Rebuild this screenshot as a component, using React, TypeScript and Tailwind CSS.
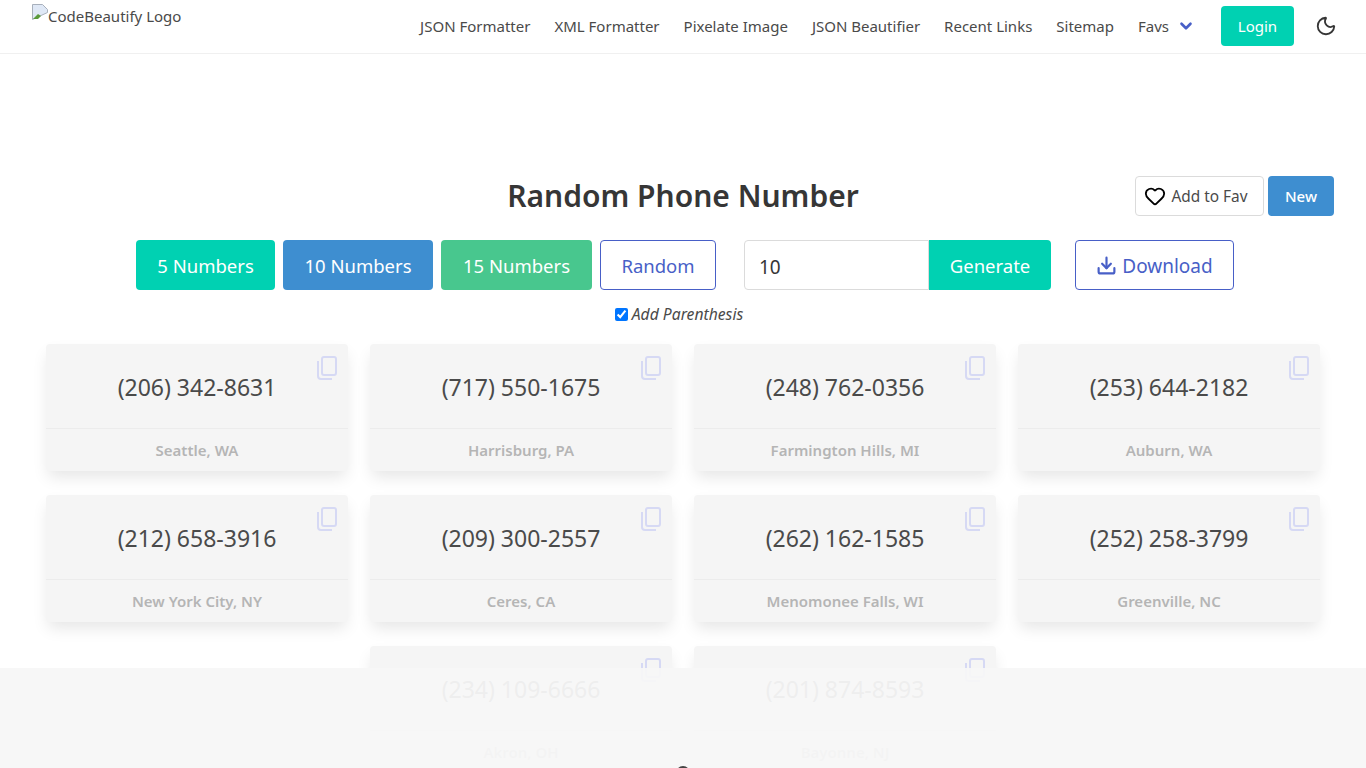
import { ChevronDown, Download, Heart, Moon } from "lucide-react"

const navLinks = ["JSON Formatter", "XML Formatter", "Pixelate Image", "JSON Beautifier", "Recent Links", "Sitemap"]

const numbers = [
  { phone: "(206) 342-8631", city: "Seattle, WA" },
  { phone: "(717) 550-1675", city: "Harrisburg, PA" },
  { phone: "(248) 762-0356", city: "Farmington Hills, MI" },
  { phone: "(253) 644-2182", city: "Auburn, WA" },
  { phone: "(212) 658-3916", city: "New York City, NY" },
  { phone: "(209) 300-2557", city: "Ceres, CA" },
  { phone: "(262) 162-1585", city: "Menomonee Falls, WI" },
  { phone: "(252) 258-3799", city: "Greenville, NC" },
]

const lastRow = [
  { phone: "(234) 109-6666", city: "Akron, OH" },
  { phone: "(201) 874-8593", city: "Bayonne, NJ" },
]

function CopyIcon() {
  return (
    <svg width="22" height="24" viewBox="0 0 22 24" fill="none" stroke="#d6d9f4" strokeWidth="2" className="absolute right-[10px] top-[12px]">
      <rect x="6" y="1" width="14" height="18" rx="2" />
      <path d="M2 5v15a3 3 0 0 0 3 3h11" />
    </svg>
  )
}

function BrokenImage() {
  return (
    <svg width="16" height="16" viewBox="0 0 16 16" className="shrink-0">
      <path d="M.5.5h10l5 5v3l-15 7z" fill="#dfe8f6" stroke="#a8b0bc" />
      <path d="M1 15l5-5 3 2-3 3z" fill="#5a9a3c" />
    </svg>
  )
}

function PhoneCard({ phone, city }: { phone: string; city: string }) {
  return (
    <div className="relative h-[127px] rounded bg-[#f5f5f5] shadow-[0_8px_16px_-2px_rgba(0,0,0,0.1)]">
      <CopyIcon />
      <div className="flex h-[85px] items-center justify-center border-b border-[#ececec] pt-[3px] text-[23px] text-[#4a4a4a]">{phone}</div>
      <div className="flex h-[42px] items-center justify-center text-[15px] font-semibold text-[#b5b5b5]">{city}</div>
    </div>
  )
}

export default function App() {
  return (
    <div className="relative h-screen overflow-hidden bg-white font-['Noto_Sans',sans-serif] text-[#363636]">
      <nav className="flex h-[54px] items-start justify-between border-b border-[#f0f0f0] pl-[32px] pr-[29px]">
        <div className="mt-[4px] flex items-start text-[15px] text-[#4a4a4a]">
          <BrokenImage />
          <span className="leading-[24px]">CodeBeautify Logo</span>
        </div>
        <div className="flex h-[52px] items-center text-[15px] text-[#4a4a4a]">
          <div className="flex items-center gap-[24px]">
            {navLinks.map((link) => (
              <a key={link}>{link}</a>
            ))}
            <a className="flex items-center gap-[8px]">
              Favs <ChevronDown size={18} strokeWidth={3.5} className="text-[#485fc7]" />
            </a>
          </div>
          <button className="ml-[26px] h-[40px] w-[73px] rounded bg-[#00d1b2] text-[15px] text-white">Login</button>
          <Moon size={22} strokeWidth={2} className="ml-[21px] text-[#363636]" />
        </div>
      </nav>

      <header className="mt-[122px] grid grid-cols-[1fr_auto_1fr] items-center px-[32px]">
        <div />
        <h1 className="text-[30px] font-semibold leading-[40px]">Random Phone Number</h1>
        <div className="flex justify-end gap-[4px]">
          <button className="flex h-[40px] w-[129px] items-center justify-center gap-[5px] rounded border border-[#dbdbdb] bg-white pr-[7px] text-[15.4px] text-[#4a4a4a]">
            <Heart size={22} strokeWidth={2} className="text-black" />
            <span className="pt-[2px]">Add to Fav</span>
          </button>
          <button className="h-[40px] w-[66px] rounded bg-[#3e8ed0] text-[15px] font-medium text-white">New</button>
        </div>
      </header>

      <div className="mt-[24px] flex justify-center pl-[4px] text-[18.5px]">
        <div className="flex gap-[8px]">
          <button className="h-[50px] w-[139px] rounded bg-[#00d1b2] pt-[1px] text-white">5 Numbers</button>
          <button className="h-[50px] w-[150px] rounded bg-[#3e8ed0] pt-[1px] text-white">10 Numbers</button>
          <button className="h-[50px] w-[151px] rounded bg-[#48c78e] pt-[1px] text-white">15 Numbers</button>
          <button className="h-[50px] w-[116px] rounded border border-[#485fc7] bg-white pt-[1px] text-[#485fc7]">Random</button>
        </div>
        <div className="ml-[28px] flex">
          <input readOnly value="10" className="h-[50px] w-[185px] rounded-l border border-[#dbdbdb] px-[14px] pt-[3px] text-[19px] text-[#363636] outline-none" />
          <button className="h-[50px] w-[122px] rounded-r bg-[#00d1b2] pt-[1px] text-white">Generate</button>
        </div>
        <button className="ml-[24px] flex h-[50px] w-[159px] items-center justify-center gap-[5px] rounded border border-[#485fc7] bg-white text-[19px] text-[#485fc7]">
          <Download size={21} strokeWidth={2.5} />
          <span className="pt-[2px]">Download</span>
        </button>
      </div>

      <label className="mt-[13px] flex items-center justify-center gap-[4px] pr-[8px] text-[15.7px] italic leading-[22px] text-[#4a4a4a]">
        <input type="checkbox" defaultChecked readOnly className="h-[13px] w-[13px] accent-[#0075ff]" />
        Add Parenthesis
      </label>

      <main className="mt-[19px] grid grid-cols-4 gap-x-[22px] gap-y-[24px] px-[46px]">
        {numbers.map((n) => (
          <PhoneCard key={n.phone} {...n} />
        ))}
        <div />
        {lastRow.map((n) => (
          <PhoneCard key={n.phone} {...n} />
        ))}
      </main>

      <div className="absolute bottom-0 left-0 right-0 flex h-[100px] items-end justify-center bg-[#f7f7f7]/95">
        <div className="-mb-[12px] h-[14px] w-[14px] rounded-full border-2 border-[#444]" />
      </div>
    </div>
  )
}
